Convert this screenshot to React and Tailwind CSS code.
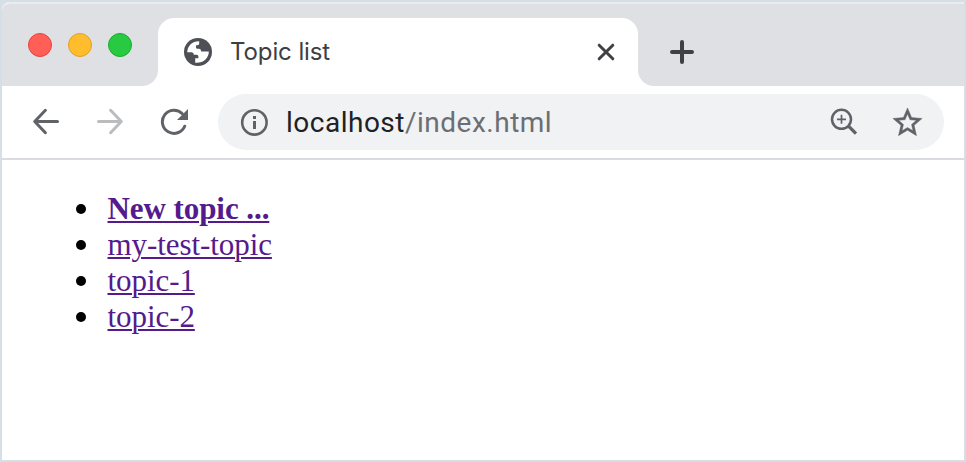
import React from 'react';

function Tab() {
  return (
    <div className="relative ml-[156px] flex h-[68px] w-[480px] items-center rounded-t-[16px] bg-white pl-[26px] pr-[22px]">
      <span className="absolute bottom-0 -left-4 size-4 bg-[radial-gradient(circle_at_0_0,#dfe0e4_15.5px,#fff_16.5px)]" />
      <span className="absolute bottom-0 -right-4 size-4 bg-[radial-gradient(circle_at_100%_0,#dfe0e4_15.5px,#fff_16.5px)]" />
      <svg viewBox="0 0 28 28" className="size-7 shrink-0">
        <circle cx="14" cy="14" r="14" fill="#4e5055" />
        <path
          d="M3.2 14.2C3.5 7.7 8.4 3 15.2 3.2V5.6Q15.2 7.2 13.6 7.2H12V9.3Q12 10.8 13.5 10.8H15.1Q17.2 11 17.2 13.5H24.8C25 20 19.4 25.4 11.2 24.8V20.2H14.4V18.4Q14.4 16.8 12.8 16.8H9.8Q9.8 14.2 7.4 14.2Z"
          fill="#fff"
        />
      </svg>
      <span className="ml-[18px] font-[Inter,sans-serif] text-[24px] leading-none tracking-[-0.1px] text-[#3c4043]">Topic list</span>
      <svg viewBox="0 0 20 20" className="ml-auto size-5" fill="none" stroke="#3f4144" strokeWidth="3" strokeLinecap="round">
        <path d="M3.2 3.2L16.8 16.8M16.8 3.2L3.2 16.8" />
      </svg>
    </div>
  );
}

function AddressBar() {
  return (
    <div className="ml-[27px] mr-5 flex h-14 flex-1 items-center rounded-full bg-[#f1f2f4] pl-[22px] pr-[23px]">
      <svg viewBox="0 0 28 28" className="size-7 shrink-0">
        <circle cx="14.4" cy="14.4" r="12.2" fill="none" stroke="#5f6368" strokeWidth="2.6" />
        <path d="M13 8h3v3h-3zM13 13h3v8h-3z" fill="#5f6368" />
      </svg>
      <span className="ml-[18px] whitespace-nowrap pt-0.5 font-[Roboto,sans-serif] text-[28px] leading-none tracking-[0.5px] text-[#202124]">
        localhost<span className="text-[#6b6e72]">/index.html</span>
      </span>
      <svg viewBox="0 0 28 28" className="ml-auto size-7" fill="none" stroke="#5f6368">
        <circle cx="11.5" cy="11.3" r="9.5" strokeWidth="2.5" />
        <path d="M18.5 18.2L26 25.7" strokeWidth="3.3" />
        <path d="M7 11.3H16M11.5 6.8V15.8" strokeWidth="1.7" />
      </svg>
      <svg viewBox="0 0 24 24" className="-mr-1 ml-[32px] size-[35px]" fill="#5f6368" stroke="#5f6368" strokeWidth="0.3">
        <path d="M22 9.24l-7.19-.62L12 2 9.19 8.63 2 9.24l5.46 4.73L5.82 21 12 17.27 18.18 21l-1.63-7.03L22 9.24zM12 15.4l-3.76 2.27 1-4.28-3.32-2.88 4.38-.38L12 6.1l1.71 4.04 4.38.38-3.32 2.88 1 4.28L12 15.4z" />
      </svg>
    </div>
  );
}

function Topic({ children, bold }) {
  return (
    <li className="flex h-9 items-center">
      <span className="mr-[21.5px] size-[10px] rounded-full bg-black" />
      <a className={`${bold ? 'font-bold' : ''} leading-9 tracking-[-0.07px] text-[#551a8b] underline decoration-2 underline-offset-2`}>{children}</a>
    </li>
  );
}

export default function App() {
  return (
    <div className="h-[462px] w-[966px] overflow-hidden bg-[#d4dfe6] p-[2px]">
      <div className="flex h-full flex-col overflow-hidden rounded-tl-[8px] bg-white">
        <div className="flex h-[84px] items-end rounded-tl-[8px] border-t-2 border-[#ebecef] bg-[#dfe0e4]">
          <div className="-mr-[130px] mb-[29px] ml-[26px] flex w-[104px] gap-4">
            <span className="size-6 shrink-0 rounded-full border border-[#e2463f] bg-[#ff5f57]" />
            <span className="size-6 shrink-0 rounded-full border border-[#e0a024] bg-[#ffbd2e]" />
            <span className="size-6 shrink-0 rounded-full border border-[#1bac2c] bg-[#28ca41]" />
          </div>
          <Tab />
          <svg viewBox="0 0 24 24" className="mb-[22px] ml-8 size-6" stroke="#3f4144" strokeWidth="4" strokeLinecap="round">
            <path d="M2 12H22M12 2V22" />
          </svg>
        </div>
        <div className="flex h-[74px] items-center border-b-2 border-[#dadbe0] bg-white">
          <svg viewBox="0 0 28 28" className="ml-[30px] size-7" fill="none" stroke="#5f6368" strokeWidth="3" strokeLinecap="round" strokeLinejoin="round">
            <path d="M25.5 13.5H2.9M13.4 2.3L2.7 13.5L13.4 24.7" />
          </svg>
          <svg viewBox="0 0 28 28" className="ml-9 size-7" fill="none" stroke="#babcbe" strokeWidth="3" strokeLinecap="round" strokeLinejoin="round">
            <path d="M2.5 13.5H25.1M14.6 2.3L25.3 13.5L14.6 24.7" />
          </svg>
          <svg viewBox="0 0 30 30" className="ml-[36px] mr-px size-[30px]" fill="none">
            <path d="M24.7 19.2A11.6 11.6 0 1 1 22.3 6.7" stroke="#5f6368" strokeWidth="3" strokeLinecap="round" />
            <path d="M28 2V13H17Z" fill="#5f6368" />
          </svg>
          <AddressBar />
        </div>
        <ul className="pl-[74px] pt-[31px] font-['Liberation_Serif',serif] text-[31px]">
          <Topic bold>New topic ...</Topic>
          <Topic>my-test-topic</Topic>
          <Topic>topic-1</Topic>
          <Topic>topic-2</Topic>
        </ul>
      </div>
    </div>
  );
}
